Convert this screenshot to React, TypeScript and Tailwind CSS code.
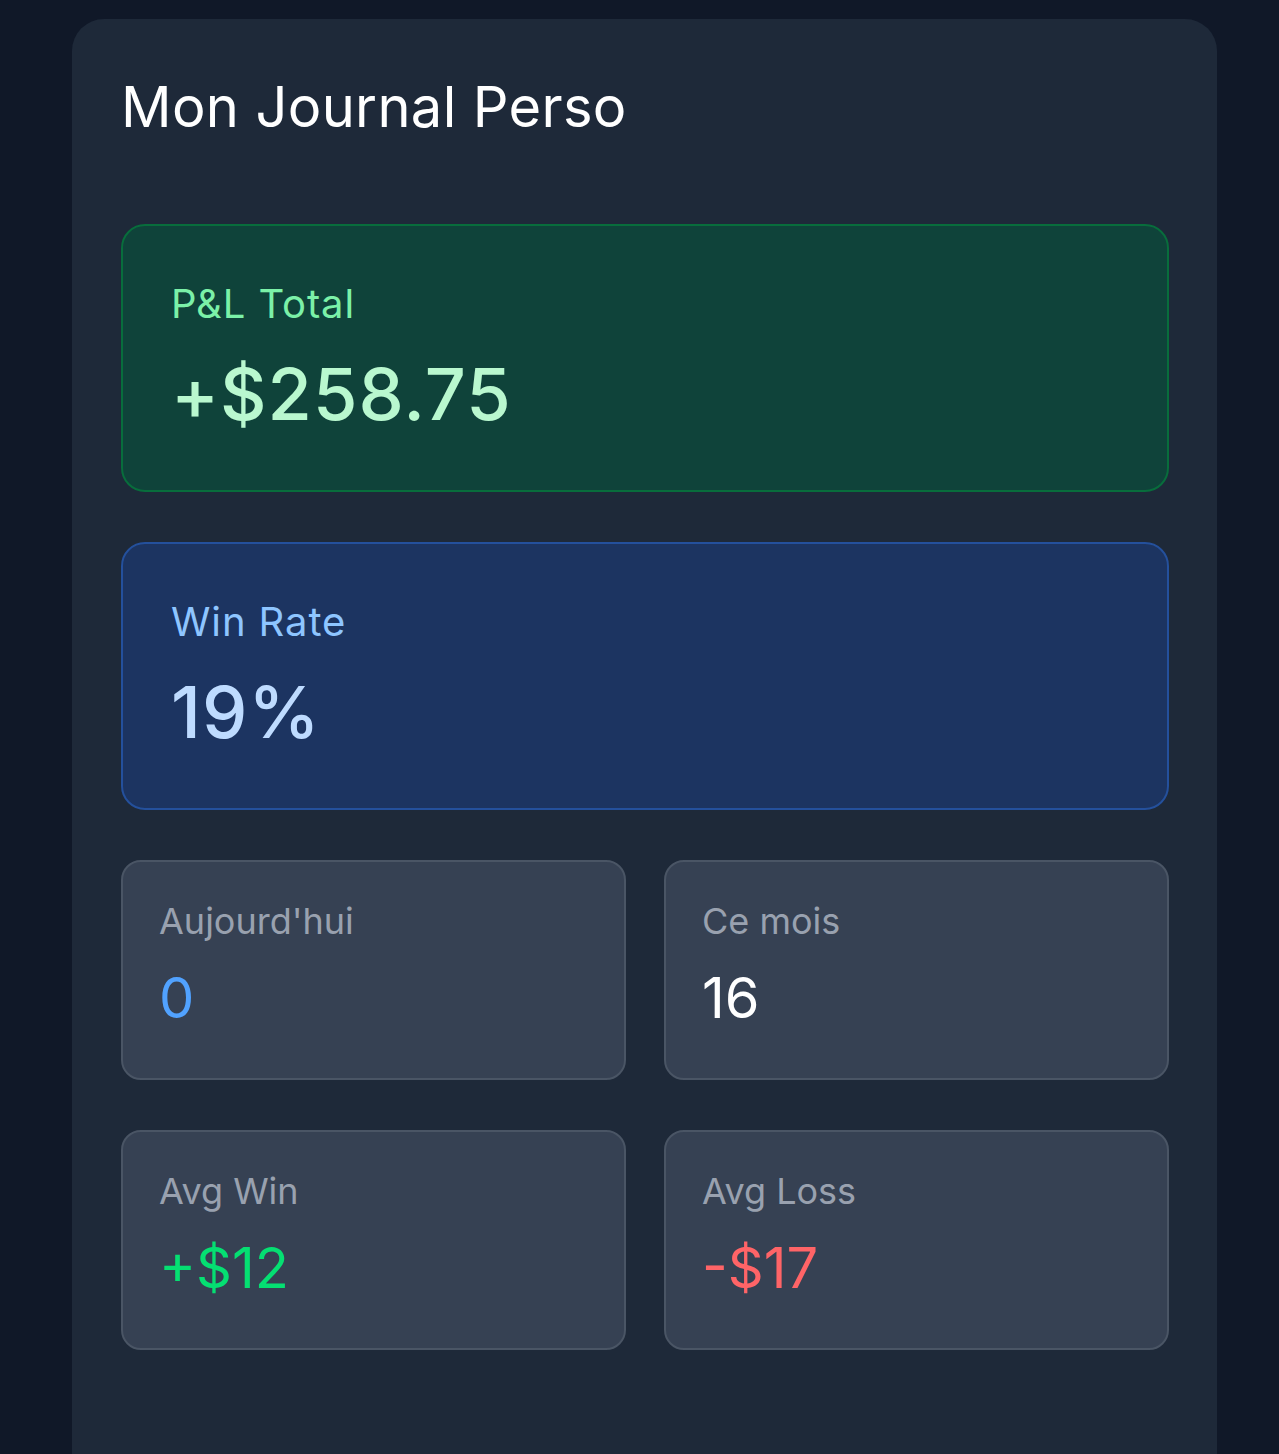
import React from "react";

function SmallCard({ label, value, valueClass }: { label: string; value: string; valueClass: string }) {
  return (
    <div className="h-[220px] rounded-[20px] border-2 border-[#4a5565] bg-[#364153] pl-[36px] pt-[34px]">
      <div className="h-[50px] text-[36px] leading-[50px] text-[#99a1af]">{label}</div>
      <div className={`mt-[20px] h-[64px] text-[56px] leading-[64px] ${valueClass}`}>{value}</div>
    </div>
  );
}

export default function App() {
  return (
    <div
      className="min-h-screen w-full overflow-hidden bg-[#101828] pt-[19px]"
      style={{ fontFamily: "Inter, 'Noto Sans', sans-serif" }}
    >
      <div className="ml-[72px] w-[1145px] min-h-[1500px] rounded-[32px] bg-[#1e2939] pl-[49px] pr-[48px] pt-[56px]">
        <h1 className="h-[64px] text-[56px] leading-[64px] font-normal tracking-[0.35px] text-white">Mon Journal Perso</h1>

        <div className="mt-[85px] flex flex-col gap-[50px]">
          <div className="h-[268px] rounded-[24px] border-2 border-[#086d3c] bg-[#0f433a] pl-[48px] pt-[50px]">
            <div className="h-[56px] text-[40px] leading-[56px] font-normal tracking-[0.9px] text-[#7bf1a8]">P&amp;L Total</div>
            <div className="mt-[18px] h-[88px] text-[72px] leading-[88px] font-medium tracking-[1px] text-[#b9f8cf]">+$258.75</div>
          </div>

          <div className="h-[268px] rounded-[24px] border-2 border-[#24509c] bg-[#1c3461] pl-[48px] pt-[50px]">
            <div className="h-[56px] text-[40px] leading-[56px] font-normal tracking-[0.9px] text-[#8ec5ff]">Win Rate</div>
            <div className="mt-[18px] h-[88px] text-[72px] leading-[88px] font-medium tracking-[1px] text-[#bedbff]">19%</div>
          </div>

          <div className="grid grid-cols-2 gap-x-[38px] gap-y-[50px]">
            <SmallCard label="Aujourd'hui" value="0" valueClass="text-[#51a2ff]" />
            <SmallCard label="Ce mois" value="16" valueClass="text-white" />
            <SmallCard label="Avg Win" value="+$12" valueClass="text-[#05df72]" />
            <SmallCard label="Avg Loss" value="-$17" valueClass="text-[#ff6467]" />
          </div>
        </div>
      </div>
    </div>
  );
}
